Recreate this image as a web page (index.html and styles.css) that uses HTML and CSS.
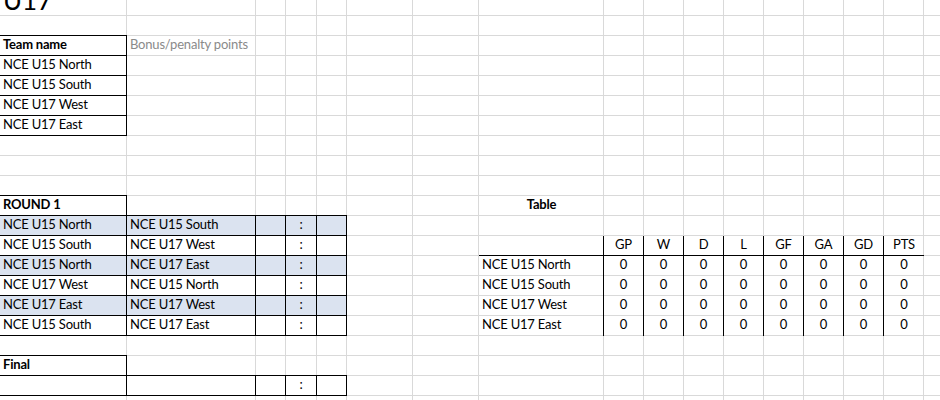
FILE: index.html
```html
<!DOCTYPE html>
<html>
<head>
<meta charset="utf-8">
<title>U17</title>
<link rel="stylesheet" href="styles.css">
</head>
<body>
<div class="sheet">
  <div class="title">U17</div>

  <div class="teams">
    <div class="cell top bold">Team name</div>
    <div class="cell">NCE U15 North</div>
    <div class="cell">NCE U15 South</div>
    <div class="cell">NCE U17 West</div>
    <div class="cell">NCE U17 East</div>
  </div>
  <div class="note">Bonus/penalty points</div>

  <div class="fixtures round">
    <div class="cell top bold">ROUND 1</div>
    <div class="rest"></div>
    <div class="cell fill">NCE U15 North</div><div class="cell fill">NCE U15 South</div><div class="cell fill"></div><div class="cell fill c">:</div><div class="cell fill"></div>
    <div class="cell">NCE U15 South</div><div class="cell">NCE U17 West</div><div class="cell"></div><div class="cell c">:</div><div class="cell"></div>
    <div class="cell fill">NCE U15 North</div><div class="cell fill">NCE U17 East</div><div class="cell fill"></div><div class="cell fill c">:</div><div class="cell fill"></div>
    <div class="cell">NCE U17 West</div><div class="cell">NCE U15 North</div><div class="cell"></div><div class="cell c">:</div><div class="cell"></div>
    <div class="cell fill">NCE U17 East</div><div class="cell fill">NCE U17 West</div><div class="cell fill"></div><div class="cell fill c">:</div><div class="cell fill"></div>
    <div class="cell">NCE U15 South</div><div class="cell">NCE U17 East</div><div class="cell"></div><div class="cell c">:</div><div class="cell"></div>
  </div>

  <div class="fixtures final">
    <div class="cell top bold">Final</div>
    <div class="rest"></div>
    <div class="cell"></div><div class="cell"></div><div class="cell"></div><div class="cell c">:</div><div class="cell"></div>
  </div>

  <div class="tlabel bold">Table</div>
  <div class="standings">
    <div class="hd"></div><div class="hd">GP</div><div class="hd">W</div><div class="hd">D</div><div class="hd">L</div><div class="hd">GF</div><div class="hd">GA</div><div class="hd">GD</div><div class="hd last">PTS</div>
    <div class="nm">NCE U15 North</div><div class="v">0</div><div class="v">0</div><div class="v">0</div><div class="v">0</div><div class="v">0</div><div class="v">0</div><div class="v">0</div><div class="v last">0</div>
    <div class="nm">NCE U15 South</div><div class="v">0</div><div class="v">0</div><div class="v">0</div><div class="v">0</div><div class="v">0</div><div class="v">0</div><div class="v">0</div><div class="v last">0</div>
    <div class="nm">NCE U17 West</div><div class="v">0</div><div class="v">0</div><div class="v">0</div><div class="v">0</div><div class="v">0</div><div class="v">0</div><div class="v">0</div><div class="v last">0</div>
    <div class="nm">NCE U17 East</div><div class="v">0</div><div class="v">0</div><div class="v">0</div><div class="v">0</div><div class="v">0</div><div class="v">0</div><div class="v">0</div><div class="v last">0</div>
  </div>
</div>
</body>
</html>
```

FILE: styles.css
```css
html, body {
  margin: 0;
  padding: 0;
  background: #ffffff;
}

body {
  width: 940px;
  height: 400px;
  overflow: hidden;
  font-family: Lato, "Open Sans", sans-serif;
  font-size: 13px;
  letter-spacing: -0.2px;
  color: #000000;
}

.sheet {
  --grid: #d9d9d9;
  height: 400px;
  display: grid;
  grid-template-columns: 127px 129px 30px 31px 30px 66px 66px 125px repeat(8, 40px) 1fr;
  grid-template-rows: 16px repeat(19, 20px) 1fr;
  background-image:
    linear-gradient(var(--grid), var(--grid)),
    linear-gradient(var(--grid), var(--grid)),
    linear-gradient(var(--grid), var(--grid)),
    linear-gradient(var(--grid), var(--grid)),
    linear-gradient(var(--grid), var(--grid)),
    linear-gradient(var(--grid), var(--grid)),
    linear-gradient(var(--grid), var(--grid)),
    linear-gradient(var(--grid), var(--grid)),
    repeating-linear-gradient(to right, transparent 0 39px, var(--grid) 39px 40px),
    repeating-linear-gradient(to bottom, transparent 0 19px, var(--grid) 19px 20px);
  background-size:
    1px 100%, 1px 100%, 1px 100%, 1px 100%, 1px 100%, 1px 100%, 1px 100%, 1px 100%,
    400px 100%,
    100% 400px;
  background-position:
    126px 0, 255px 0, 285px 0, 316px 0, 346px 0, 412px 0, 478px 0, 603px 0,
    604px 0,
    0 -4px;
  background-repeat:
    no-repeat, no-repeat, no-repeat, no-repeat, no-repeat, no-repeat, no-repeat, no-repeat,
    no-repeat,
    repeat-y;
}

.bold { font-weight: 700; }

.title {
  grid-column: 1 / 3;
  grid-row: 1;
  align-self: end;
  font-size: 26px;
  line-height: 26px;
  letter-spacing: 0;
  margin-bottom: 3px;
  padding-left: 3px;
}

.cell {
  box-sizing: border-box;
  border-right: 1px solid #000000;
  border-bottom: 1px solid #000000;
  padding: 0 3px;
  line-height: 17px;
  white-space: nowrap;
  overflow: hidden;
}

.cell.top {
  margin-top: -1px;
  border-top: 1px solid #000000;
}

.cell.fill { background: #dbe3f0; }
.cell.c { text-align: center; padding: 0; }

.teams {
  grid-column: 1;
  grid-row: 3 / 8;
  display: grid;
  grid-auto-rows: 20px;
}

.note {
  grid-column: 2 / 4;
  grid-row: 3;
  padding-left: 3px;
  line-height: 17px;
  color: #8a8a8a;
  white-space: nowrap;
}

.fixtures {
  display: grid;
  grid-template-columns: 127px 129px 30px 31px 30px;
  grid-auto-rows: 20px;
}

.fixtures .rest {
  grid-column: 2 / 6;
  border-bottom: 1px solid #000000;
}

.round {
  grid-column: 1 / 6;
  grid-row: 11 / 18;
}

.final {
  grid-column: 1 / 6;
  grid-row: 19 / 21;
}

.tlabel {
  grid-column: 8;
  grid-row: 11;
  text-align: center;
  line-height: 17px;
}

.standings {
  grid-column: 8 / 17;
  grid-row: 13 / 18;
  display: grid;
  grid-template-columns: 125px repeat(8, 40px);
  grid-auto-rows: 20px;
  line-height: 17px;
}

.standings > div {
  box-sizing: border-box;
  border-right: 1px solid #000000;
  white-space: nowrap;
}

.standings .hd {
  border-bottom: 1px solid #000000;
  text-align: center;
}

.standings .nm { padding-left: 3px; }
.standings .v { text-align: center; }
.standings .last { border-right: 0; }
```
